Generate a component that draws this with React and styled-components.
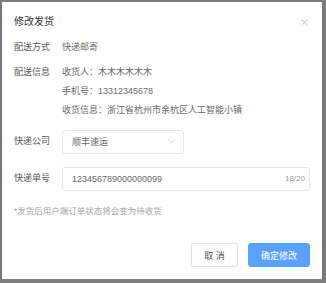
import React from "react";
import styled, { createGlobalStyle } from "styled-components";

const GlobalStyle = createGlobalStyle`
  html, body {
    margin: 0;
    padding: 0;
    background: #7d7d7d;
  }
  body {
    font-family: "Liberation Sans", "Noto Sans CJK SC", sans-serif;
  }
`;

const Modal = styled.div`
  box-sizing: border-box;
  width: 320px;
  height: 277px;
  margin: 2px 0 0 2px;
  background: #fff;
  box-shadow: 0 1px 3px rgba(0, 0, 0, 0.2);
  padding: 0 12px 12px 12px;
  display: flex;
  flex-direction: column;
`;

const Header = styled.div`
  display: flex;
  align-items: center;
  justify-content: space-between;
  padding-top: 11px;
  height: 18px;
  line-height: 18px;
`;

const Title = styled.span`
  font-size: 10px;
  color: #333;
`;

const Close = styled.svg`
  width: 7px;
  height: 7px;
  margin-right: 2px;
`;

const Body = styled.div`
  margin-top: 7px;
  display: flex;
  flex-direction: column;
`;

const Row = styled.div`
  display: flex;
  align-items: ${(p) => (p.center ? "center" : "flex-start")};
  margin-top: ${(p) => p.gap || 0}px;
  font-size: 9px;
`;

const Label = styled.div`
  width: 48px;
  flex-shrink: 0;
  color: #5a5a5a;
  line-height: 19px;
`;

const Lines = styled.div`
  display: flex;
  flex-direction: column;
  color: #6a6a6a;
  line-height: 19px;
`;

const Select = styled.div`
  box-sizing: border-box;
  width: 122px;
  height: 24px;
  border: 1px solid #e4e7ed;
  border-radius: 3px;
  display: flex;
  align-items: center;
  justify-content: space-between;
  padding: 0 8px 0 9px;
  color: #6a6a6a;
`;

const Input = styled(Select)`
  width: 248px;
  padding-right: 4px;
`;

const Count = styled.span`
  color: #999;
  font-size: 8px;
`;

const Note = styled.div`
  margin-top: 14px;
  font-size: 8.5px;
  color: #a6a6a6;
  line-height: 12px;
`;

const Footer = styled.div`
  margin-top: auto;
  display: flex;
  justify-content: flex-end;
  gap: 10px;
`;

const Button = styled.button`
  box-sizing: border-box;
  height: 24px;
  width: ${(p) => p.w}px;
  border-radius: 3px;
  font-family: inherit;
  font-size: 9px;
  padding: 0;
  cursor: pointer;
  border: 1px solid ${(p) => (p.primary ? "#5ba1f8" : "#dcdfe6")};
  background: ${(p) => (p.primary ? "#5ba1f8" : "#fff")};
  color: ${(p) => (p.primary ? "#fff" : "#555")};
`;

export default function App() {
  return (
    <>
      <GlobalStyle />
      <Modal>
        <Header>
          <Title>修改发货</Title>
          <Close viewBox="0 0 10 10">
            <path d="M1 1L9 9M9 1L1 9" stroke="#a8a8a8" strokeWidth="1" fill="none" />
          </Close>
        </Header>
        <Body>
          <Row>
            <Label>配送方式</Label>
            <Lines>快递邮寄</Lines>
          </Row>
          <Row gap={5.5}>
            <Label>配送信息</Label>
            <Lines>
              <span>收货人：木木木木木木</span>
              <span>手机号：13312345678</span>
              <span>收货信息：浙江省杭州市余杭区人工智能小镇</span>
            </Lines>
          </Row>
          <Row center gap={10}>
            <Label>快递公司</Label>
            <Select>
              <span>顺丰速运</span>
              <svg width="7" height="5" viewBox="0 0 8 5">
                <path d="M0.5 0.5L4 4L7.5 0.5" stroke="#c0c4cc" strokeWidth="0.8" fill="none" />
              </svg>
            </Select>
          </Row>
          <Row center gap={13}>
            <Label>快递单号</Label>
            <Input>
              <span>123456789000000099</span>
              <Count>18/20</Count>
            </Input>
          </Row>
          <Note>*发货后用户端订单状态将会变为待收货</Note>
        </Body>
        <Footer>
          <Button w={47}>取 消</Button>
          <Button primary w={62}>确定修改</Button>
        </Footer>
      </Modal>
    </>
  );
}
